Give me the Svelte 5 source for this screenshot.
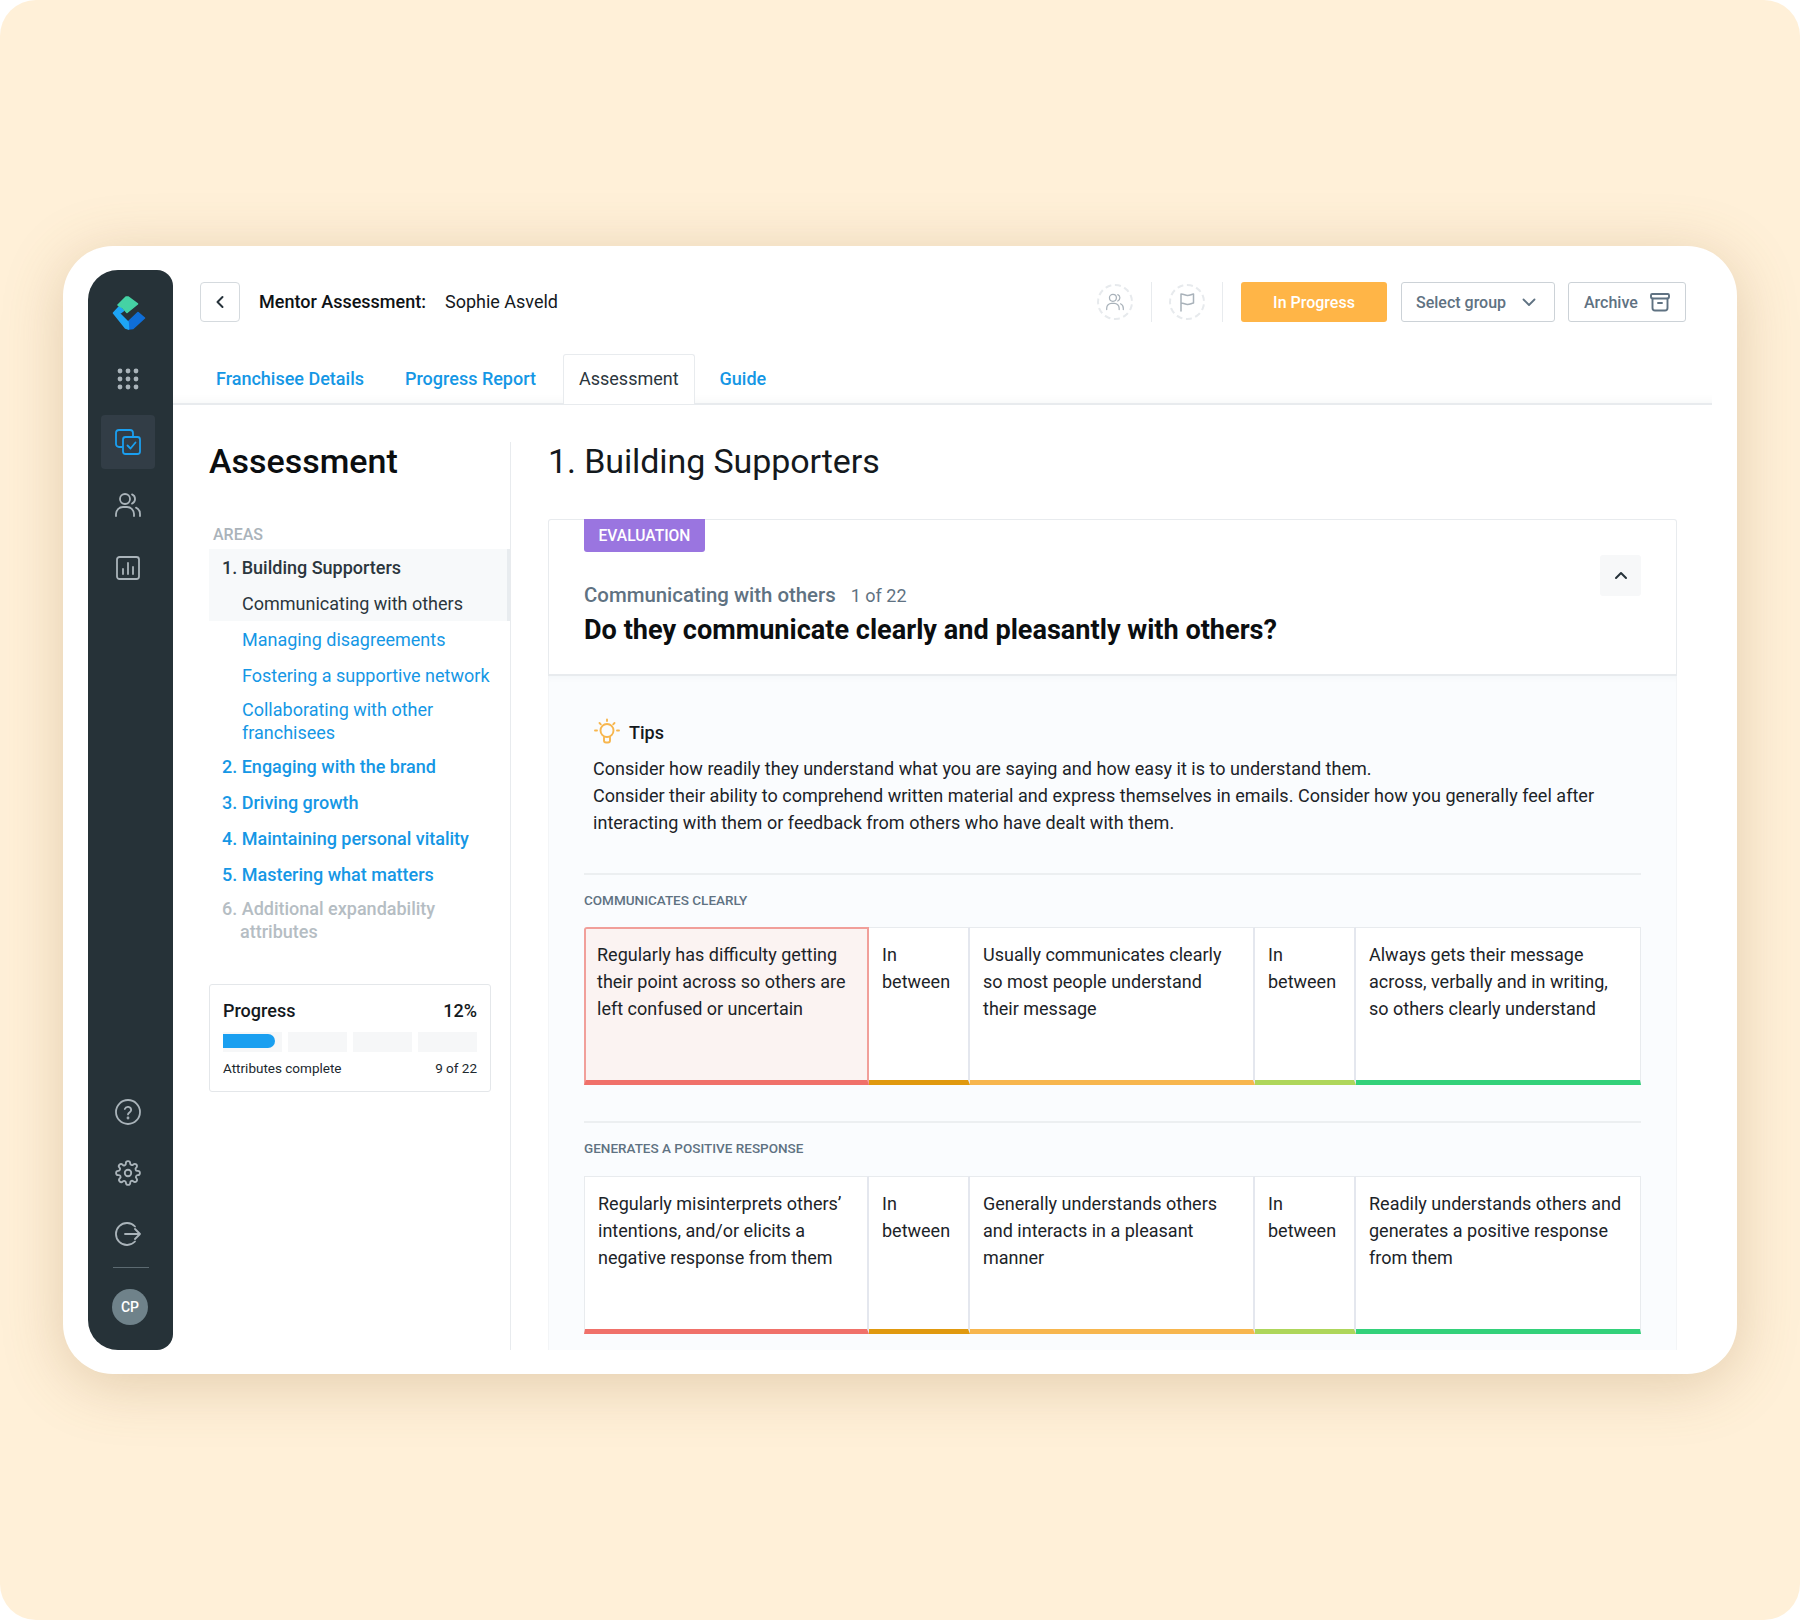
<script>
  const areasBefore = [
    { label: 'Managing disagreements' },
    { label: 'Fostering a supportive network' },
    { label: 'Collaborating with other franchisees', tall: true }
  ];
  const areasAfter = ['2. Engaging with the brand', '3. Driving growth', '4. Maintaining personal vitality', '5. Mastering what matters'];

  const sections = [
    {
      title: 'COMMUNICATES CLEARLY',
      selected: 0,
      cells: [
        'Regularly has difficulty getting their point across so others are left confused or uncertain',
        'In between',
        'Usually communicates clearly so most people understand their message',
        'In between',
        'Always gets their message across, verbally and in writing, so others clearly understand'
      ]
    },
    {
      title: 'GENERATES A POSITIVE RESPONSE',
      selected: -1,
      cells: [
        'Regularly misinterprets others’ intentions, and/or elicits a negative response from them',
        'In between',
        'Generally understands others and interacts in a pleasant manner',
        'In between',
        'Readily understands others and generates a positive response from them'
      ]
    }
  ];
  const barColors = ['#f0716a', '#e0990f', '#f7b64e', '#aed65b', '#33d17a'];
</script>

<div class="page">
  <div class="card">
    <aside class="rail">
      <svg class="logo" width="34" height="35" viewBox="12 9 34 35" stroke-width="1.6" stroke-linejoin="round">
        <path d="M28 36L38 26.5L44.5 32L33 42.5L28.5 43Z" fill="#0f6ed8" stroke="#0f6ed8" />
        <path d="M13.5 27L19.5 20.5L23.5 24.5L19.5 27.5L28 36L28.5 43L25.5 42Z" fill="#1ea5f5" stroke="#1ea5f5" />
        <path d="M18 19L26 11L28 11L37.5 18L27 26.5L22.5 21.5Z" fill="#45d2a4" stroke="#45d2a4" />
      </svg>
      <svg class="nav-dots" width="22" height="22" viewBox="0 0 22 22" fill="#aab4ba">
        <circle cx="3" cy="3" r="2.4" /><circle cx="11" cy="3" r="2.4" /><circle cx="19" cy="3" r="2.4" />
        <circle cx="3" cy="11" r="2.4" /><circle cx="11" cy="11" r="2.4" /><circle cx="19" cy="11" r="2.4" />
        <circle cx="3" cy="19" r="2.4" /><circle cx="11" cy="19" r="2.4" /><circle cx="19" cy="19" r="2.4" />
      </svg>
      <div class="nav-active">
        <svg width="26" height="26" viewBox="0 0 26 26" fill="none" stroke="#1a9ff0" stroke-width="1.8" stroke-linecap="round" stroke-linejoin="round">
          <path d="M7 18H4a3 3 0 0 1-3-3V4a3 3 0 0 1 3-3h11a3 3 0 0 1 3 3v3" />
          <rect x="8" y="8" width="17" height="17" rx="2.5" />
          <path d="M12.5 16.5l3 3 5-6" />
        </svg>
      </div>
      <svg class="nav-users" width="26" height="24" viewBox="0 0 26 24" fill="none" stroke="#aab4ba" stroke-width="1.8" stroke-linecap="round">
        <circle cx="10" cy="6" r="5" />
        <path d="M1 23v-2a7 7 0 0 1 7-7h4a7 7 0 0 1 7 7v2" />
        <path d="M17 1.4a5 5 0 0 1 0 9.2" />
        <path d="M21 14.6a7 7 0 0 1 4 6.4v2" />
      </svg>
      <svg class="nav-chart" width="24" height="24" viewBox="0 0 24 24" fill="none" stroke="#aab4ba" stroke-width="1.8" stroke-linecap="round">
        <rect x="1" y="1" width="22" height="22" rx="2.5" />
        <path d="M7 18v-5M12 18V7M17 18v-7" />
      </svg>

      <div class="rail-bottom">
        <svg width="26" height="26" viewBox="0 0 26 26" fill="none" stroke="#aab4ba" stroke-width="1.8" stroke-linecap="round">
          <circle cx="13" cy="13" r="12" />
          <path d="M9.8 10a3.3 3.3 0 0 1 6.4 1c0 2.2-3.2 2.6-3.2 4.4" />
          <circle cx="13" cy="19" r="0.5" fill="#aab4ba" />
        </svg>
        <svg width="26" height="26" viewBox="0 0 24 24" fill="none" stroke="#aab4ba" stroke-width="1.7" stroke-linejoin="round">
          <circle cx="12" cy="12" r="3" />
          <path d="M19.4 15a1.65 1.65 0 0 0 .33 1.82l.06.06a2 2 0 1 1-2.83 2.83l-.06-.06a1.65 1.65 0 0 0-2.82 1.17V21a2 2 0 1 1-4 0v-.09a1.65 1.65 0 0 0-2.82-1.11l-.06.06a2 2 0 1 1-2.83-2.83l.06-.06A1.65 1.65 0 0 0 3.09 14H3a2 2 0 1 1 0-4h.09A1.65 1.65 0 0 0 4.2 7.18l-.06-.06a2 2 0 1 1 2.83-2.83l.06.06A1.65 1.65 0 0 0 10 3.09V3a2 2 0 1 1 4 0v.09a1.65 1.65 0 0 0 2.82 1.11l.06-.06a2 2 0 1 1 2.83 2.83l-.06.06A1.65 1.65 0 0 0 20.91 10H21a2 2 0 1 1 0 4h-.09a1.65 1.65 0 0 0-1.51 1z" />
        </svg>
        <svg width="26" height="26" viewBox="0 0 26 26" fill="none" stroke="#aab4ba" stroke-width="1.8" stroke-linecap="round" stroke-linejoin="round">
          <path d="M20 5.5a11 11 0 1 0 0 15" />
          <path d="M10 13h15M20 8l5 5-5 5" />
        </svg>
      </div>
      <div class="rail-line"></div>
      <div class="avatar">CP</div>
    </aside>

    <main class="app">
      <header class="topbar">
        <button class="back" aria-label="Back">
          <svg width="10" height="14" viewBox="0 0 10 14" fill="none" stroke="#26323a" stroke-width="2" stroke-linecap="round" stroke-linejoin="round"><path d="M7.5 2L2.5 7l5 5" /></svg>
        </button>
        <div class="crumb"><strong>Mentor Assessment:</strong><span>Sophie Asveld</span></div>
        <div class="top-actions">
          <div class="ring">
            <svg width="18" height="18" viewBox="0 0 26 24" fill="none" stroke="#a9b2ba" stroke-width="1.8" stroke-linecap="round">
              <circle cx="10" cy="6" r="5" /><path d="M1 23v-2a7 7 0 0 1 7-7h4a7 7 0 0 1 7 7v2" /><path d="M17 1.4a5 5 0 0 1 0 9.2" /><path d="M21 14.6a7 7 0 0 1 4 6.4v2" />
            </svg>
          </div>
          <div class="vline"></div>
          <div class="ring">
            <svg width="16" height="20" viewBox="0 0 16 20" fill="none" stroke="#a9b2ba" stroke-width="1.5" stroke-linejoin="round" stroke-linecap="round"><path d="M2 19V2c3 0 4 1.4 6.5 1.4S12 2.5 14.5 2v9c-2.5.5-3.500 1.400-6 1.400S5 11 2 11" /></svg>
          </div>
          <div class="vline"></div>
          <div class="status">In Progress</div>
          <button class="outline select">
            <span>Select group</span>
            <svg width="14" height="9" viewBox="0 0 14 9" fill="none" stroke="#5f7282" stroke-width="1.8" stroke-linecap="round" stroke-linejoin="round"><path d="M1.5 1.5L7 7l5.5-5.5" /></svg>
          </button>
          <button class="outline archive">
            <span>Archive</span>
            <svg width="20" height="20" viewBox="0 0 20 20" fill="none" stroke="#5f7282" stroke-width="1.9" stroke-linecap="round" stroke-linejoin="round">
              <rect x="1" y="2" width="18" height="4.5" rx="1.2" /><path d="M2.5 6.5V16a2.5 2.5 0 0 0 2.5 2.5h10a2.5 2.5 0 0 0 2.5-2.5V6.5M8 11h4" />
            </svg>
          </button>
        </div>
      </header>

      <nav class="tabs">
        <span class="tab">Franchisee Details</span>
        <span class="tab">Progress Report</span>
        <span class="tab current">Assessment</span>
        <span class="tab">Guide</span>
      </nav>

      <div class="body">
        <section class="side">
          <h2>Assessment</h2>
          <div class="areas-label">AREAS</div>
          <div class="active-block">
            <div class="area head">1. Building Supporters</div>
            <div class="sub current">Communicating with others</div>
          </div>
          {#each areasBefore as item}
            <div class="sub" class:tall={item.tall}>{item.label}</div>
          {/each}
          {#each areasAfter as item}
            <div class="area link">{item}</div>
          {/each}
          <div class="area muted">6. Additional expandability attributes</div>

          <div class="progress">
            <div class="progress-top"><span>Progress</span><span>12%</span></div>
            <div class="segments">
              <div class="segment"><div class="fill" style="width: 88%"></div></div>
              <div class="segment"></div>
              <div class="segment"></div>
              <div class="segment"></div>
            </div>
            <div class="progress-foot"><span>Attributes complete</span><span>9 of 22</span></div>
          </div>
        </section>

        <section class="content">
          <h1>1. Building Supporters</h1>
          <div class="question">
            <div class="q-head">
              <div class="badge">EVALUATION</div>
              <button class="collapse" aria-label="Collapse">
                <svg width="14" height="9" viewBox="0 0 14 9" fill="none" stroke="#26323a" stroke-width="2" stroke-linecap="round" stroke-linejoin="round"><path d="M2 7l5-5 5 5" /></svg>
              </button>
              <div class="q-sub"><strong>Communicating with others</strong><span>1 of 22</span></div>
              <div class="q-title">Do they communicate clearly and pleasantly with others?</div>
            </div>
            <div class="q-body">
              <div class="tips">
                <div class="tips-head">
                  <svg width="28" height="28" viewBox="0 0 28 28" fill="none" stroke="#f7b64e" stroke-width="1.9" stroke-linecap="round">
                    <circle cx="14" cy="12.5" r="6.5" />
                    <path d="M11 19.5v3a2 2 0 0 0 2 2h2a2 2 0 0 0 2-2v-3M14 1.5v1.6M4 12.5H2M26 12.5h-2M6.5 5l1.3 1.3M21.500 5l-1.3 1.3" />
                  </svg>
                  <span>Tips</span>
                </div>
                <p>Consider how readily they understand what you are saying and how easy it is to understand them.</p>
                <p>Consider their ability to comprehend written material and express themselves in emails. Consider how you generally feel after interacting with them or feedback from others who have dealt with them.</p>
              </div>

              {#each sections as section}
                <div class="scale-section">
                  <div class="scale-label">{section.title}</div>
                  <div class="scale">
                    {#each section.cells as cell, i}
                      <div class="cell" class:selected={section.selected === i} style="--bar: {barColors[i]}">{cell}</div>
                    {/each}
                  </div>
                </div>
              {/each}
            </div>
          </div>
        </section>
      </div>
    </main>
  </div>
</div>

<style>
  :global(body) {
    margin: 0;
    background: #fff;
  }

  .page {
    width: 1800px;
    height: 1620px;
    box-sizing: border-box;
    padding: 246px 63px 0;
    background: #fff0d8;
    border-radius: 36px;
    font-family: Roboto, "Liberation Sans", sans-serif;
    color: #14191d;
    overflow: hidden;
  }

  .card {
    width: 1674px;
    height: 1128px;
    box-sizing: border-box;
    padding: 24px 25px;
    display: flex;
    background: #fff;
    border-radius: 50px;
    box-shadow: 0 10px 60px rgba(150, 110, 60, 0.28);
  }

  .rail {
    width: 85px;
    height: 1080px;
    flex: none;
    box-sizing: border-box;
    display: flex;
    flex-direction: column;
    align-items: center;
    padding-top: 25px;
    background: #263238;
    border-radius: 30px 16px 16px 30px;
  }

  .logo { margin-right: 3px; }

  .nav-dots {
    margin-top: 38px;
    margin-right: 5px;
  }

  .nav-active {
    width: 54px;
    height: 54px;
    margin-top: 25px;
    margin-right: 5px;
    display: flex;
    align-items: center;
    justify-content: center;
    background: #323d46;
    border-radius: 4px;
  }

  .nav-users {
    margin-top: 24px;
    margin-right: 5px;
  }

  .nav-chart {
    margin-top: 39px;
    margin-right: 5px;
  }

  .rail-bottom {
    margin-top: auto;
    margin-right: 5px;
    display: flex;
    flex-direction: column;
    align-items: center;
    gap: 35px;
  }

  .rail-line {
    width: 36px;
    height: 1px;
    margin-top: 20px;
    background: #5c6a71;
  }

  .avatar {
    width: 36px;
    height: 36px;
    margin-top: 21px;
    margin-right: 1px;
    margin-bottom: 25px;
    display: flex;
    align-items: center;
    justify-content: center;
    border-radius: 50%;
    background: #6f828a;
    color: #fff;
    font-size: 14px;
    font-weight: 500;
  }

  .app {
    flex: 1;
    min-width: 0;
    height: 1080px;
    display: flex;
    flex-direction: column;
    overflow: hidden;
  }

  .topbar {
    height: 40px;
    flex: none;
    margin-top: 12px;
    display: flex;
    align-items: center;
    padding: 0 26px 0 27px;
  }

  .back {
    width: 40px;
    height: 40px;
    padding: 0;
    display: flex;
    align-items: center;
    justify-content: center;
    background: #fff;
    border: 1px solid #d5dade;
    border-radius: 4px;
  }

  .crumb {
    margin-left: 19px;
    margin-top: -2px;
    display: flex;
    gap: 19px;
    font-size: 18px;
  }

  .crumb strong { font-weight: 500; color: #0e1215; }

  .top-actions {
    margin-left: auto;
    display: flex;
    align-items: center;
  }

  .ring {
    width: 36px;
    height: 36px;
    display: flex;
    align-items: center;
    justify-content: center;
    border: 2px dashed #e7eaed;
    border-radius: 50%;
    box-sizing: border-box;
  }

  .vline {
    width: 1px;
    height: 40px;
    margin: 0 17px;
    background: #e8ebee;
  }

  .vline:nth-child(2) { margin-left: 18px; }
  .vline:nth-child(4) { margin-right: 18px; }

  .status {
    width: 146px;
    height: 40px;
    display: flex;
    align-items: center;
    justify-content: center;
    background: #ffb547;
    border-radius: 3px;
    color: #fff;
    font-size: 16px;
    font-weight: 500;
  }

  .outline {
    height: 40px;
    box-sizing: border-box;
    display: flex;
    align-items: center;
    background: #fff;
    border: 1.5px solid #ccd2d7;
    border-radius: 3px;
    color: #5f7282;
    font-family: inherit;
    font-size: 16px;
    font-weight: 500;
  }

  .select {
    width: 154px;
    margin-left: 14px;
    padding: 0 18px 0 14px;
    justify-content: space-between;
  }

  .archive {
    width: 118px;
    margin-left: 13px;
    padding: 0 15px;
    justify-content: space-between;
  }

  .tabs {
    height: 49px;
    flex: none;
    margin-top: 32px;
    display: flex;
    padding-left: 43px;
    gap: 10px;
    border-bottom: 2px solid #e8ebee;
    box-shadow: inset 0 -12px 12px -12px rgba(38, 50, 56, 0.05);
  }

  .tab {
    display: flex;
    align-items: center;
    padding-bottom: 1px;
    margin-right: 30px;
    color: #1597e5;
    font-size: 18px;
    font-weight: 500;
  }

  .tab:first-child { margin-right: 31px; }

  .tab.current {
    height: 50px;
    box-sizing: border-box;
    margin: 0 15px 0 -13px;
    padding: 0 15px 2px;
    background: #fff;
    border: 1px solid #e8ebee;
    border-bottom: none;
    border-radius: 3px 3px 0 0;
    color: #2b363d;
    font-weight: 400;
  }

  .body {
    flex: 1;
    min-height: 0;
    display: flex;
    padding-top: 37px;
  }

  .side {
    width: 338px;
    flex: none;
    box-sizing: border-box;
    padding-left: 36px;
    border-right: 1px solid #e8ebee;
  }

  .side h2 {
    margin: 0;
    height: 44px;
    line-height: 38px;
    font-size: 34px;
    font-weight: 500;
    color: #0b0e10;
  }

  .areas-label {
    margin: 39px 0 0 4px;
    height: 24px;
    line-height: 20px;
    color: #aab3ba;
    font-size: 16px;
    font-weight: 500;
  }

  .active-block {
    background: #f7f9fa;
    border-right: 3px solid #e8ecef;
    height: 72px;
  }

  .area {
    padding-left: 13px;
    min-height: 36px;
    display: flex;
    align-items: center;
    font-size: 18px;
    font-weight: 500;
    line-height: 23px;
  }

  .area.head { color: #2b363d; }
  .area.link { color: #1597e5; }

  .area.muted {
    display: block;
    width: 225px;
    margin-top: 5px;
    padding-left: 31px;
    text-indent: -18px;
    color: #b5bdc3;
  }

  .sub {
    min-height: 36px;
    padding-left: 33px;
    display: flex;
    align-items: center;
    color: #1597e5;
    font-size: 18px;
    line-height: 23px;
  }

  .sub.current { color: #2b363d; }

  .sub.tall {
    width: 210px;
    min-height: 46px;
    margin: 5px 0 4px;
  }

  .progress {
    width: 282px;
    height: 108px;
    box-sizing: border-box;
    margin-top: 41px;
    padding: 14px 13px 0;
    border: 1px solid #e4e7ea;
    border-radius: 3px;
  }

  .progress-top {
    display: flex;
    justify-content: space-between;
    font-size: 18px;
    font-weight: 500;
    line-height: 24px;
  }

  .segments {
    margin-top: 9px;
    display: flex;
    gap: 6px;
  }

  .segment {
    flex: 1;
    height: 20px;
    padding-top: 2px;
    box-sizing: border-box;
    background: #f6f7f8;
  }

  .fill {
    height: 14px;
    background: #1a9ff0;
    border-radius: 0 7px 7px 0;
  }

  .progress-foot {
    margin-top: 6px;
    display: flex;
    justify-content: space-between;
    font-size: 13.5px;
    line-height: 20px;
    color: #20282e;
  }

  .content {
    flex: 1;
    min-width: 0;
    padding-left: 37px;
  }

  .content h1 {
    margin: 0;
    height: 44px;
    line-height: 38px;
    font-size: 34px;
    font-weight: 400;
    letter-spacing: -0.1px;
    color: #14191d;
  }

  .question {
    width: 1129px;
    margin-top: 33px;
  }

  .q-head {
    position: relative;
    height: 157px;
    box-sizing: border-box;
    padding: 0 35px;
    border: 1px solid #e8ebee;
    border-bottom: 2px solid #e8ebee;
    border-radius: 3px 3px 0 0;
  }

  .badge {
    width: 121px;
    height: 33px;
    margin-top: -1px;
    display: flex;
    align-items: center;
    justify-content: center;
    background: #9a75e0;
    border-radius: 0 0 3px 3px;
    color: #fff;
    font-size: 15.6px;
    font-weight: 500;
  }

  .collapse {
    position: absolute;
    right: 35px;
    top: 35px;
    width: 41px;
    height: 41px;
    padding: 0;
    display: flex;
    align-items: center;
    justify-content: center;
    background: #f7f8f9;
    border: none;
    border-radius: 3px;
  }

  .q-sub {
    margin-top: 30px;
    display: flex;
    align-items: baseline;
    gap: 15px;
    height: 26px;
    line-height: 26px;
    color: #5f7282;
    font-size: 18px;
  }

  .q-sub strong {
    font-size: 20.4px;
    font-weight: 500;
  }

  .q-title {
    margin-top: 5px;
    font-size: 27.1px;
    font-weight: 700;
    line-height: 34px;
    color: #0b0e10;
  }

  .q-body {
    height: 700px;
    box-sizing: border-box;
    padding: 42px 35px 0;
    background: #fafcfe;
    border-left: 1px solid #f3f5f7;
    border-right: 1px solid #f3f5f7;
    box-shadow: inset 0 8px 8px -8px rgba(38, 50, 56, 0.05);
  }

  .tips {
    padding: 0 9px 37px;
    border-bottom: 2px solid #eceff1;
  }

  .tips-head {
    display: flex;
    align-items: center;
    gap: 8px;
    height: 28px;
    margin-bottom: 9px;
    font-size: 18px;
    font-weight: 500;
  }

  .tips p {
    margin: 0;
    font-size: 18px;
    line-height: 27px;
    letter-spacing: 0.03px;
    color: #1c2328;
  }

  .scale-section + .scale-section {
    margin-top: 36px;
    border-top: 2px solid #eceff1;
  }

  .scale-label {
    height: 52px;
    line-height: 50px;
    color: #5f7282;
    font-size: 13.5px;
    font-weight: 500;
  }

  .scale-section + .scale-section .scale-label { height: 53px; }

  .scale {
    display: grid;
    grid-template-columns: 285px 101px 285px 101px 285px;
    height: 158px;
  }

  .cell {
    box-sizing: border-box;
    padding: 13px 13px 0;
    background: #fff;
    border-top: 1px solid #e8ebee;
    border-right: 2px solid #e4e7ee;
    border-bottom: 5px solid var(--bar);
    font-size: 18px;
    line-height: 27px;
    color: #1c2328;
  }

  .cell.selected {
    background: #fbf3f2;
    border: 2px solid #f19f9a;
    border-bottom: 5px solid var(--bar);
    border-radius: 3px 0 0 0;
    padding: 12px 11px 0;
  }

  .cell:first-child:not(.selected) { border-left: 1px solid #e8ebee; }
  .cell:last-child { border-right: 1px solid #e8ebee; }
</style>
